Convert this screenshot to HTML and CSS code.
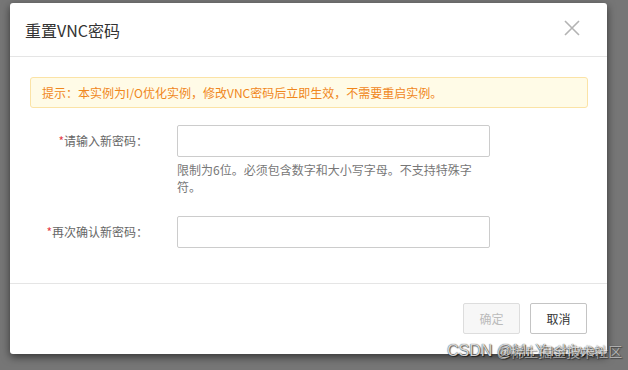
FILE: index.html
```html
<!DOCTYPE html>
<html lang="zh-CN">
<head>
  <meta charset="UTF-8">
  <meta name="viewport" content="width=device-width, initial-scale=1.0">
  <title>重置VNC密码</title>
  <link rel="stylesheet" href="styles.css">
</head>
<body>
  <div class="dialog">
    <div class="dialog-header">
      <h2>重置VNC密码</h2>
      <span class="close">
        <svg width="16" height="16" viewBox="0 0 16 16"><path d="M1 1L15 15M15 1L1 15" stroke="#b3b3b3" stroke-width="1.6" fill="none"/></svg>
      </span>
    </div>

    <div class="dialog-body">
      <div class="notice">提示：本实例为I/O优化实例，修改VNC密码后立即生效，不需要重启实例。</div>

      <div class="form-row first">
        <label for="newPwd"><span class="req">*</span>请输入新密码：</label>
        <div class="field">
          <input type="password" id="newPwd">
          <div class="help">限制为6位。必须包含数字和大小写字母。不支持特殊字符。</div>
        </div>
      </div>

      <div class="form-row">
        <label for="confirmPwd"><span class="req">*</span>再次确认新密码：</label>
        <div class="field">
          <input type="password" id="confirmPwd">
        </div>
      </div>
    </div>

    <div class="dialog-footer">
      <button class="btn" disabled>确定</button>
      <button class="btn">取消</button>
    </div>
  </div>

  <div class="watermark">
    <span class="wm-a">CSDN @Mr.Yushiwen</span>
    <span class="wm-b">@稀土掘金技术社区</span>
  </div>
</body>
</html>
```

FILE: styles.css
```css
html, body {
  margin: 0;
  height: 100%;
}
body {
  font-family: "Noto Sans CJK SC", "Liberation Sans", sans-serif;
  background: #767676;
  color: #333;
  font-size: 12px;
  padding: 3px 0 0 10px;
  box-sizing: border-box;
  overflow: hidden;
  position: relative;
}
.dialog {
  width: 597px;
  height: 351px;
  background: #fff;
  border-radius: 3px;
  box-shadow: 0 3px 8px rgba(0,0,0,0.55);
  display: flex;
  flex-direction: column;
}
.dialog-header {
  height: 53px;
  border-bottom: 1px solid #e5e5e5;
  display: flex;
  align-items: center;
  justify-content: space-between;
  padding: 0 27px 0 15px;
}
.dialog-header h2 {
  margin: 0;
  font-size: 16px;
  font-weight: normal;
  color: #333;
  line-height: 20px;
}
.close {
  display: flex;
  margin-top: -3px;
}
.dialog-body {
  padding: 20px 19px 0 20px;
  flex: 1;
}
.notice {
  border: 1px solid #fbe3a6;
  background: #fffbe7;
  border-radius: 3px;
  color: #f0871c;
  line-height: 29px;
  padding: 0 11px;
}
.form-row {
  display: flex;
  margin-top: 21px;
}
.form-row.first {
  margin-top: 17px;
}
.form-row label {
  width: 118px;
  text-align: right;
  line-height: 32px;
  color: #666;
  margin-right: 29px;
  white-space: nowrap;
}
.req {
  color: #e5414a;
}
.field input {
  display: block;
  width: 313px;
  height: 32px;
  box-sizing: border-box;
  border: 1px solid #ccc;
  border-radius: 2px;
  outline: none;
  padding: 0 8px;
}
.help {
  width: 313px;
  margin-top: 4px;
  line-height: 17px;
  color: #777;
}
.dialog-footer {
  border-top: 1px solid #e5e5e5;
  padding: 19px 20px 20px;
  display: flex;
  justify-content: flex-end;
  gap: 10px;
}
.btn {
  width: 57px;
  height: 31px;
  border: 1px solid #c4c4c4;
  border-radius: 2px;
  background: #fff;
  color: #333;
  font-family: inherit;
  font-size: 12px;
  padding: 0;
}
.btn:disabled {
  background: #f7f7f7;
  border-color: #ddd;
  color: #bbb;
}
.watermark {
  position: absolute;
  left: 447px;
  top: 339px;
  width: 180px;
  height: 24px;
  font-size: 16px;
  line-height: 24px;
  white-space: nowrap;
}
.watermark span {
  position: absolute;
  top: 0;
  color: rgba(245,245,245,0.85);
  text-shadow: 0 0 1px #222, 1px 1px 1px rgba(0,0,0,0.6);
}
.wm-a {
  left: 0;
  font-family: "Liberation Sans", sans-serif;
}
.wm-b {
  left: 50px;
  font-size: 14px;
  opacity: 0.6;
}
```
